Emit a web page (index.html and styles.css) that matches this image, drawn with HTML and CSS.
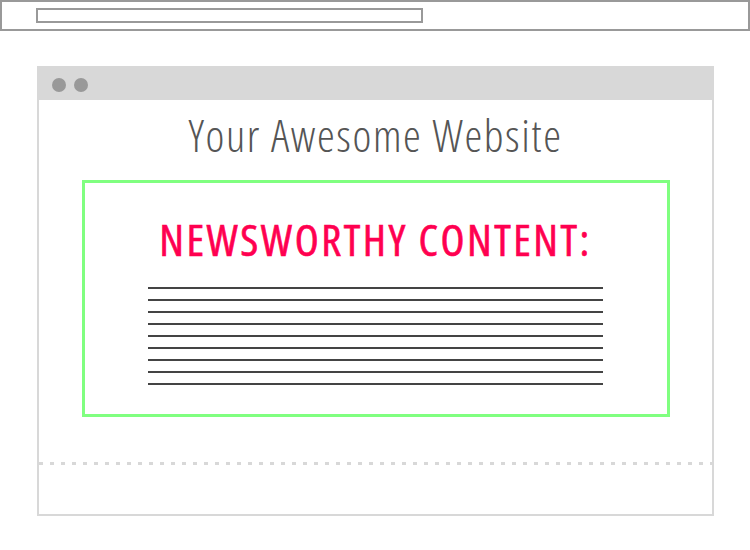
FILE: index.html
```html
<!DOCTYPE html>
<html>
<head>
<meta charset="utf-8">
<title>Your Awesome Website</title>
<link rel="stylesheet" href="styles.css">
</head>
<body>
  <div class="browser-bar">
    <div class="address-bar"></div>
  </div>
  <div class="window">
    <div class="window-header">
      <span class="dot"></span>
      <span class="dot"></span>
    </div>
    <h1 class="site-title">Your Awesome Website</h1>
    <section class="news-box">
      <h2 class="news-title">NEWSWORTHY CONTENT:</h2>
      <div class="text-lines">
        <div class="line"></div>
        <div class="line"></div>
        <div class="line"></div>
        <div class="line"></div>
        <div class="line"></div>
        <div class="line"></div>
        <div class="line"></div>
        <div class="line"></div>
        <div class="line"></div>
      </div>
    </section>
    <div class="fold-line"></div>
  </div>
</body>
</html>
```
FILE: styles.css
```css
* { box-sizing: border-box; }
html, body { margin: 0; padding: 0; background: #fff; }
body { width: 750px; height: 550px; overflow: hidden; font-family: "Open Sans", "Liberation Sans", sans-serif; }

.browser-bar {
  width: 750px;
  height: 31px;
  border: 2px solid #999;
  padding: 6px 0 0 34px;
}
.address-bar {
  width: 387px;
  height: 15px;
  border: 2px solid #999;
}

.window {
  margin: 35px 0 0 37px;
  width: 677px;
  height: 450px;
  border: 2px solid #d8d8d8;
  display: flex;
  flex-direction: column;
}
.window-header {
  height: 32px;
  background: #d8d8d8;
  display: flex;
  align-items: center;
  gap: 8px;
  padding: 2px 0 0 13px;
}
.dot {
  width: 14px;
  height: 14px;
  border-radius: 50%;
  background: #999;
}

.site-title {
  margin: 8px 0 0;
  font-size: 45px;
  line-height: 54px;
  font-weight: 300;
  font-stretch: 75%;
  letter-spacing: 1.6px;
  color: #555;
  text-align: center;
}

.news-box {
  margin: 18px auto 0;
  width: 588px;
  border: 3px solid #80ff80;
  padding: 30px 0 29px;
  display: flex;
  flex-direction: column;
  align-items: center;
}
.news-title {
  margin: 0;
  font-size: 44px;
  line-height: 52px;
  font-weight: 500;
  font-stretch: 75%;
  letter-spacing: 2.5px;
  color: #ff0050;
  -webkit-text-stroke: 0.6px #ff0050;
}
.text-lines {
  margin-top: 22px;
  width: 455px;
  display: flex;
  flex-direction: column;
  gap: 10px;
}
.line {
  height: 2px;
  background: #444;
}

.fold-line {
  margin-top: 45px;
  height: 3px;
  background: repeating-linear-gradient(to right, #d8d8d8 0 4px, transparent 4px 11px);
}
```
